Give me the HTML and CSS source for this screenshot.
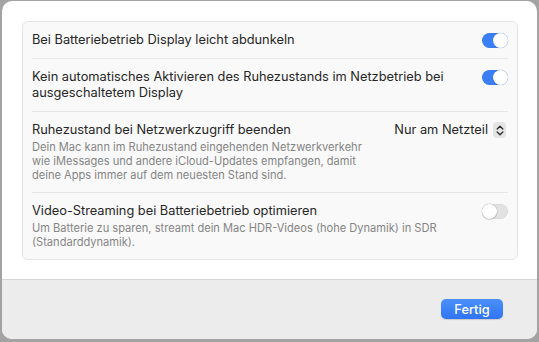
FILE: index.html
```html
<!DOCTYPE html>
<html lang="de">
<head>
  <meta charset="UTF-8">
  <meta name="viewport" content="width=device-width, initial-scale=1.0">
  <title>Energie-Optionen</title>
  <link rel="stylesheet" href="styles.css">
</head>
<body>
  <div class="sheet">
    <div class="sheet-content">
      <div class="group">
        <div class="row">
          <div class="row-text">
            <p class="row-title">Bei Batteriebetrieb Display leicht abdunkeln</p>
          </div>
          <span class="toggle toggle-on"></span>
        </div>

        <div class="row">
          <div class="row-text">
            <p class="row-title">Kein automatisches Aktivieren des Ruhezustands im Netzbetrieb bei ausgeschaltetem Display</p>
          </div>
          <span class="toggle toggle-on"></span>
        </div>

        <div class="row">
          <div class="row-text">
            <p class="row-title">Ruhezustand bei Netzwerkzugriff beenden</p>
            <p class="row-desc">Dein Mac kann im Ruhezustand eingehenden Netzwerkverkehr wie iMessages und andere iCloud-Updates empfangen, damit deine Apps immer auf dem neuesten Stand sind.</p>
          </div>
          <div class="popup">
            <span class="popup-label">Nur am Netzteil</span>
            <span class="stepper">
              <svg width="8" height="11" viewBox="0 0 8 11">
                <path d="M1.2 4 L4 1.3 L6.8 4 M1.2 7 L4 9.7 L6.8 7" fill="none" stroke="#2a2a2a" stroke-width="1.3" stroke-linecap="round" stroke-linejoin="round"/>
              </svg>
            </span>
          </div>
        </div>

        <div class="row">
          <div class="row-text">
            <p class="row-title">Video-Streaming bei Batteriebetrieb optimieren</p>
            <p class="row-desc">Um Batterie zu sparen, streamt dein Mac HDR-Videos (hohe Dynamik) in SDR (Standarddynamik).</p>
          </div>
          <span class="toggle"></span>
        </div>
      </div>
    </div>

    <div class="footer">
      <button class="done-button">Fertig</button>
    </div>
  </div>
</body>
</html>
```

FILE: styles.css
```css
body {
  margin: 0;
  height: 342px;
  background: #a3a3a3;
  font-family: "Inter", "Noto Sans", sans-serif;
  color: #262626;
  overflow: hidden;
}

.sheet {
  margin: 1px 2px 0 2px;
  height: 338px;
  background: #ffffff;
  border-radius: 10px;
  overflow: hidden;
  display: flex;
  flex-direction: column;
}

.sheet-content {
  padding: 20px 19px 19px 20px;
}

.group {
  background: #f9f9f9;
  border: 1px solid #e5e5e5;
  border-radius: 6px;
  padding: 0 9px 0 9px;
}

.row {
  display: flex;
  align-items: flex-start;
  gap: 20px;
  padding: 10px 0;
  border-bottom: 1px solid #e6e6e6;
}

.row:last-child {
  border-bottom: none;
}

.row-text {
  flex: 1;
}

.row-title {
  margin: 0;
  font-size: 12.8px;
  line-height: 16px;
  color: #262626;
}

.row-desc {
  margin: 2px 0 0 0;
  font-size: 11.1px;
  line-height: 14px;
  color: #858585;
}

.toggle {
  position: relative;
  flex-shrink: 0;
  width: 26px;
  height: 15px;
  margin-top: 1px;
  border-radius: 8px;
  background: #e2e2e2;
  box-shadow: inset 0 0 0 0.5px rgba(0, 0, 0, 0.06);
}

.toggle::after {
  content: "";
  position: absolute;
  top: 0;
  left: 0;
  width: 15px;
  height: 15px;
  border-radius: 50%;
  background: #ffffff;
  box-shadow: 0 0 0 0.5px rgba(0, 0, 0, 0.18), 0 1px 1px rgba(0, 0, 0, 0.12);
}

.toggle-on {
  background: #3a7ff6;
}

.toggle-on::after {
  left: 11px;
  box-shadow: 0 0 0 0.5px rgba(0, 0, 0, 0.1);
}

.popup {
  display: flex;
  align-items: center;
  gap: 5px;
  flex-shrink: 0;
  margin-right: 2px;
}

.popup-label {
  font-size: 12.8px;
  line-height: 16px;
}

.stepper {
  display: flex;
  align-items: center;
  justify-content: center;
  width: 13px;
  height: 16px;
  border-radius: 4px;
  background: #e4e4e4;
}

.footer {
  flex: 1;
  background: #ececec;
  border-top: 1px solid #d6d6d6;
  display: flex;
  justify-content: flex-end;
  align-items: flex-start;
  padding: 19px 34px 0 0;
}

.done-button {
  width: 62px;
  height: 20px;
  border: none;
  border-radius: 5px;
  background: linear-gradient(#4b91f8, #2f74f3);
  box-shadow: 0 0.5px 1px rgba(0, 0, 0, 0.15);
  color: #ffffff;
  font-family: "Inter", "Noto Sans", sans-serif;
  font-size: 12.8px;
  font-weight: 500;
  padding: 0;
}
```
